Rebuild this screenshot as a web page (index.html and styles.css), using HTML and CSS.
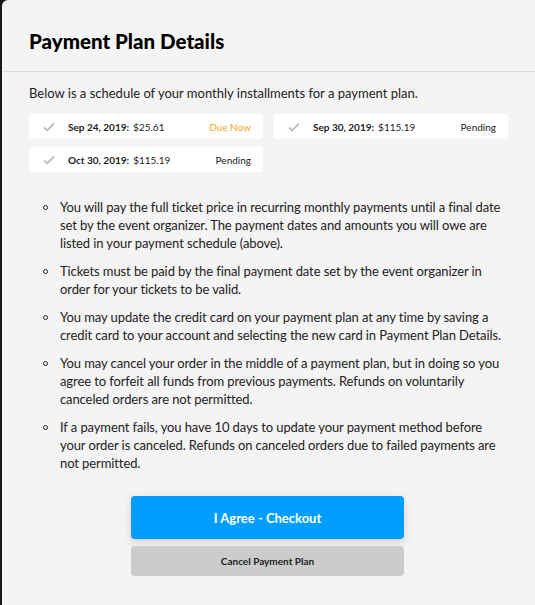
FILE: index.html
```html
<!DOCTYPE html>
<html lang="en">
<head>
  <meta charset="UTF-8">
  <meta name="viewport" content="width=device-width, height=device-height">
  <link rel="stylesheet" href="styles.css">
</head>
<body>
  <div class="modal">
    <div class="modal-header">
      <h1 class="title">Payment Plan Details</h1>
    </div>

    <div class="modal-body">
      <p class="intro">Below is a schedule of your monthly installments for a payment plan.</p>

      <div class="schedule">
        <div class="installment">
          <svg class="check" width="12" height="10" viewBox="0 0 12 10"><path d="M1 5.5 L4.2 8.5 L11 1.5" fill="none" stroke="#bdbdbd" stroke-width="1.8"/></svg>
          <span class="date">Sep 24, 2019:</span>
          <span class="amount">$25.61</span>
          <span class="status due">Due Now</span>
        </div>
        <div class="installment">
          <svg class="check" width="12" height="10" viewBox="0 0 12 10"><path d="M1 5.5 L4.2 8.5 L11 1.5" fill="none" stroke="#bdbdbd" stroke-width="1.8"/></svg>
          <span class="date">Sep 30, 2019:</span>
          <span class="amount">$115.19</span>
          <span class="status">Pending</span>
        </div>
        <div class="installment">
          <svg class="check" width="12" height="10" viewBox="0 0 12 10"><path d="M1 5.5 L4.2 8.5 L11 1.5" fill="none" stroke="#bdbdbd" stroke-width="1.8"/></svg>
          <span class="date">Oct 30, 2019:</span>
          <span class="amount">$115.19</span>
          <span class="status">Pending</span>
        </div>
      </div>

      <ul class="terms">
        <li>You will pay the full ticket price in recurring monthly payments until a final date set by the event organizer. The payment dates and amounts you will owe are listed in your payment schedule (above).</li>
        <li>Tickets must be paid by the final payment date set by the event organizer in order for your tickets to be valid.</li>
        <li>You may update the credit card on your payment plan at any time by saving a credit card to your account and selecting the new card in Payment Plan Details.</li>
        <li>You may cancel your order in the middle of a payment plan, but in doing so you agree to forfeit all funds from previous payments. Refunds on voluntarily canceled orders are not permitted.</li>
        <li>If a payment fails, you have 10 days to update your payment method before your order is canceled. Refunds on canceled orders due to failed payments are not permitted.</li>
      </ul>

      <div class="actions">
        <button class="btn btn-primary">I Agree - Checkout</button>
        <button class="btn btn-secondary">Cancel Payment Plan</button>
      </div>
    </div>
  </div>
</body>
</html>
```

FILE: styles.css
```css
html, body {
  margin: 0;
  height: 100%;
}

body {
  background: #1a1a1a;
  padding-left: 2px;
  font-family: "Lato", "Open Sans", sans-serif;
  color: #1a1a1a;
  overflow: hidden;
}

.modal {
  background: #f4f4f4;
  border-radius: 6px 0 0 0;
  min-height: 100%;
}

.modal-header {
  height: 71px;
  display: flex;
  align-items: center;
  padding: 0 27px;
  border-bottom: 1px solid #dcdcdc;
}

.title {
  margin: 0;
  padding-top: 10px;
  font-size: 20.5px;
  font-weight: 900;
  color: #000;
}

.modal-body {
  padding: 12px 27px 0;
}

.intro {
  margin: 0 0 12px;
  font-size: 13px;
  line-height: 18px;
  color: #222;
}

.schedule {
  display: grid;
  grid-template-columns: 234px 234px;
  column-gap: 11px;
  row-gap: 8px;
}

.installment {
  background: #fff;
  border-radius: 3px;
  height: 25px;
  display: flex;
  align-items: center;
  padding: 0 12px 0 14px;
  font-size: 10px;
  color: #222;
}

.check {
  margin-right: 13px;
}

.date {
  font-weight: 700;
  margin-right: 4px;
}

.status {
  margin-left: auto;
}

.status.due {
  color: #f5a623;
}

.terms {
  list-style: none;
  margin: 26px 4.5px 0 0;
  padding-left: 31px;
  font-size: 13px;
  line-height: 18px;
  letter-spacing: -0.1px;
  color: #222;
}

.terms li {
  position: relative;
  margin-bottom: 10px;
}

.terms li::before {
  content: "";
  position: absolute;
  left: -17px;
  top: 7px;
  width: 3px;
  height: 3px;
  border: 1px solid #222;
  border-radius: 50%;
}

.actions {
  display: flex;
  flex-direction: column;
  align-items: center;
  gap: 7px;
  margin-top: 24px;
  padding-right: 2px;
}

.btn {
  width: 273px;
  border: none;
  border-radius: 4px;
  font-family: inherit;
  font-weight: 700;
  cursor: pointer;
}

.btn-primary {
  height: 43px;
  background: #009dff;
  color: #fff;
  font-size: 13px;
  box-shadow: 0 3px 8px rgba(0, 0, 0, 0.15);
}

.btn-secondary {
  height: 30px;
  background: #cccccc;
  color: #222;
  font-size: 10px;
}
```
